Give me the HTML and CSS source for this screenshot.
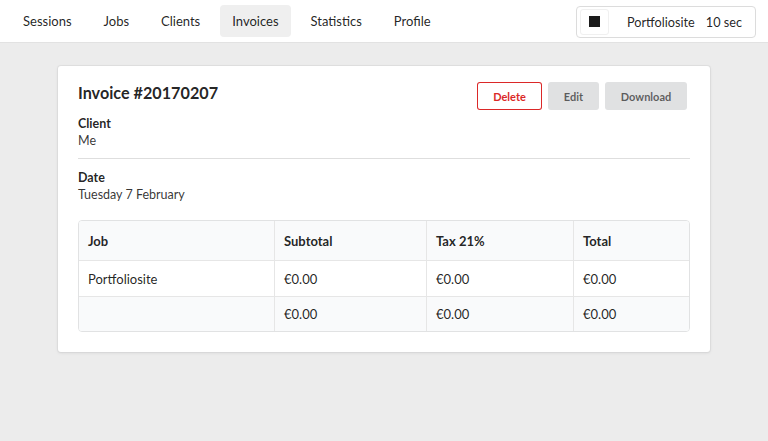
FILE: index.html
```html
<!DOCTYPE html>
<html>
<head>
<meta charset="utf-8">
<link rel="stylesheet" href="styles.css">
</head>
<body>
<nav class="topbar">
  <div class="menu">
    <a class="item">Sessions</a>
    <a class="item">Jobs</a>
    <a class="item">Clients</a>
    <a class="item active">Invoices</a>
    <a class="item">Statistics</a>
    <a class="item">Profile</a>
  </div>
  <div class="timer">
    <span class="stop"><span class="square"></span></span>
    <span class="job">Portfoliosite</span>
    <span class="time">10 sec</span>
  </div>
</nav>
<main class="page">
  <section class="card">
    <div class="card-head">
      <h1 class="title">Invoice #20170207</h1>
      <div class="actions">
        <button class="btn btn-delete">Delete</button>
        <button class="btn">Edit</button>
        <button class="btn btn-wide">Download</button>
      </div>
    </div>
    <div class="field field-first">
      <div class="label">Client</div>
      <div class="value">Me</div>
    </div>
    <hr class="divider">
    <div class="field">
      <div class="label">Date</div>
      <div class="value">Tuesday 7 February</div>
    </div>
    <table class="table">
      <thead>
        <tr><th class="c1">Job</th><th class="c2">Subtotal</th><th class="c3">Tax 21%</th><th>Total</th></tr>
      </thead>
      <tbody>
        <tr><td>Portfoliosite</td><td>€0.00</td><td>€0.00</td><td>€0.00</td></tr>
      </tbody>
      <tfoot>
        <tr><td></td><td>€0.00</td><td>€0.00</td><td>€0.00</td></tr>
      </tfoot>
    </table>
  </section>
</main>
</body>
</html>
```
FILE: styles.css
```css
* { box-sizing: border-box; }
html, body { margin: 0; height: 100%; }
body {
  font-family: Lato, "Open Sans", sans-serif;
  font-size: 12.5px;
  color: rgba(0,0,0,.87);
  background: #ececec;
}
.topbar {
  height: 43px;
  background: #fff;
  border-bottom: 1px solid #e2e2e2;
  display: flex;
  align-items: center;
  justify-content: space-between;
  padding: 0 12px 0 7px;
}
.menu { display: flex; align-items: center; }
.item {
  display: block;
  padding: 8px 12px;
  margin: 0 4px;
  font-size: 13px;
  color: rgba(0,0,0,.87);
  border-radius: 4px;
  line-height: 16px;
}
.item.active { background: #efefef; }
.timer {
  display: flex;
  align-items: center;
  height: 32px;
  width: 180px;
  border: 1px solid #dcdcdc;
  border-radius: 4px;
  padding: 0 3px;
  margin-top: 1px;
}
.stop {
  width: 29px; height: 26px;
  border: 1px solid #f0f0f0;
  border-radius: 3px;
  display: flex; align-items: center; justify-content: center;
}
.square { width: 11px; height: 11px; background: #1b1b1b; }
.job { margin-left: 18px; font-size: 12.7px; }
.time { margin-left: 11px; font-size: 12.7px; }
.page { padding: 23px 58px 0; }
.card {
  width: 652px;
  background: #fff;
  border-radius: 3px;
  box-shadow: 0 1px 3px 0 #d4d4d5, 0 0 0 1px #e0e0e0;
  padding: 13px 20px 20px;
}
.card-head { display: flex; justify-content: space-between; align-items: flex-start; }
.title { margin: 3px 0 0; font-size: 16.2px; font-weight: 700; line-height: 22px; }
.actions { display: flex; gap: 6px; margin: 3px 3px 0 0; }
.btn {
  font-family: inherit;
  font-size: 11px;
  font-weight: 700;
  height: 28px;
  border: none;
  border-radius: 3px;
  background: #e0e1e2;
  color: rgba(0,0,0,.6);
  width: 51px;
  padding: 0;
}
.btn-wide { width: 82px; }
.btn-delete {
  width: 65px;
  background: #fff;
  color: #db2828;
  box-shadow: inset 0 0 0 1px #db2828;
}
.field { margin-top: 10px; line-height: 17px; }
.field-first { margin-top: 5px; }
.label { font-weight: 700; }
.value { color: rgba(0,0,0,.8); }
.divider { border: none; border-top: 1px solid #dedede; margin: 9px 0 0; }
.table {
  width: 100%;
  margin-top: 17px;
  border-collapse: separate;
  border-spacing: 0;
  border: 1px solid #e1e2e3;
  border-radius: 4px;
  overflow: hidden;
  font-size: 13px;
}
.table th, .table td {
  text-align: left;
  padding: 0 9px;
  border-left: 1px solid #e6e6e6;
}
.table th:first-child, .table td:first-child { border-left: none; }
.table th { background: #f9fafb; font-weight: 700; height: 40px; border-bottom: 1px solid #e6e6e6; }
.table td { height: 36px; }
.table tbody td { border-bottom: 1px solid #e6e6e6; }
.table tfoot td { background: #f9fafb; height: 34px; }
.c1 { width: 195px; }
.c2 { width: 152px; }
.c3 { width: 147px; }
```
